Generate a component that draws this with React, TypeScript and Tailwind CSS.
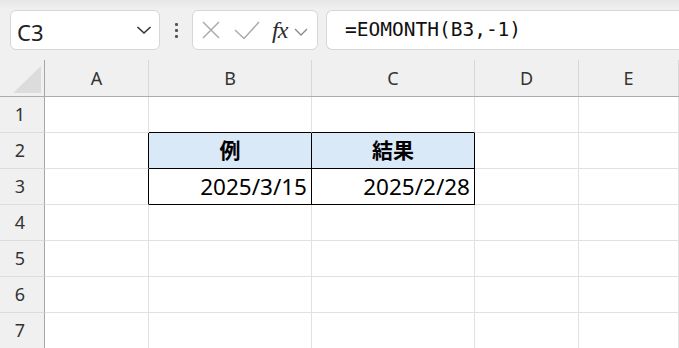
import React from "react";

const cols = ["A", "B", "C", "D", "E"];
const colW = ["w-[104px]", "w-[163px]", "w-[163px]", "w-[104px]", "flex-1"];

function Cell({
  children,
  className = "",
}: {
  children?: React.ReactNode;
  className?: string;
}) {
  return (
    <div className={"h-[36px] shrink-0 border-r border-b flex items-center " + className}>
      {children}
    </div>
  );
}

export default function App() {
  const rows = [1, 2, 3, 4, 5, 6, 7];
  const gridLine = "border-[#e1e1e1]";
  const renderCell = (r: number, c: number) => {
    const w = colW[c];
    let borders = gridLine;
    let extra = "";
    let content: React.ReactNode = null;
    const inTable = (r === 2 || r === 3) && (c === 1 || c === 2);
    if (inTable) {
      borders = "border-black";
      if (r === 2) {
        extra = "bg-[#dae9f7] justify-center font-bold text-[21px] text-black";
        content = c === 1 ? "例" : "結果";
      } else {
        extra = "justify-end pr-[4px] text-[22.5px] text-black";
        content = c === 1 ? "2025/3/15" : "2025/2/28";
      }
    } else if ((r === 2 || r === 3) && c === 0) {
      borders = "border-r-black border-b-[#e1e1e1]";
    } else if (r === 1 && (c === 1 || c === 2)) {
      borders = "border-b-black border-r-[#e1e1e1]";
    }
    return (
      <Cell key={c} className={`${w} ${borders} ${extra}`}>
        {content}
      </Cell>
    );
  };

  return (
    <div
      className="w-[679px] h-[348px] overflow-hidden bg-white"
      style={{ fontFamily: '"Noto Sans", "Noto Sans CJK JP", sans-serif' }}
    >
      {/* Toolbar */}
      <div className="h-[60px] flex items-start pt-[10px] pl-[10px] bg-gradient-to-b from-[#e6e6e6] to-[#f0f0f0] from-[0%] to-[15%]">
        {/* Name box */}
        <div className="w-[150px] h-[40px] rounded-[6px] border border-[#d6d6d6] bg-white flex items-center pl-[6px] pr-[6px] shrink-0">
          <span className="text-[22px] text-[#222] leading-none pt-[3px] flex-1">C3</span>
          <svg width="16" height="10" viewBox="0 0 16 10" className="mr-[1px]">
            <path d="M1.5 2 L8 8 L14.5 2" fill="none" stroke="#333" strokeWidth="1.6" />
          </svg>
        </div>
        {/* dots */}
        <div className="w-[32px] h-[40px] flex flex-col items-center justify-center gap-[3px] shrink-0">
          <div className="w-[3px] h-[3px] bg-[#555] rounded-[1px]" />
          <div className="w-[3px] h-[3px] bg-[#555] rounded-[1px]" />
          <div className="w-[3px] h-[3px] bg-[#555] rounded-[1px]" />
        </div>
        {/* fx box */}
        <div className="w-[126px] h-[40px] rounded-[6px] border border-[#d6d6d6] bg-white flex items-center pl-[8px] shrink-0">
          <svg width="20" height="20" viewBox="0 0 20 20">
            <path d="M2 2 L18 18 M18 2 L2 18" fill="none" stroke="#ababab" strokeWidth="1.5" />
          </svg>
          <svg width="26" height="20" viewBox="0 0 26 20" className="ml-[13px]">
            <path d="M1 10 L10 18.5 L25 2" fill="none" stroke="#ababab" strokeWidth="1.5" />
          </svg>
          <span
            className="ml-[12px] text-[24px] italic text-[#2a2a2a] leading-none tracking-[-1px]"
            style={{ fontFamily: '"Liberation Serif", "DejaVu Serif", serif' }}
          >
            fx
          </span>
          <svg width="14" height="8" viewBox="0 0 14 8" className="ml-[7px] mt-[3px]">
            <path d="M1 1 L7 7 L13 1" fill="none" stroke="#888" strokeWidth="1.3" />
          </svg>
        </div>
        {/* formula bar */}
        <div className="ml-[8px] flex-1 h-[40px] rounded-l-[6px] border border-r-0 border-[#d6d6d6] bg-white flex items-center pl-[18px]">
          <span
            className="text-[19.5px] text-[#111] leading-none"
            style={{ fontFamily: '"DejaVu Sans Mono", "Liberation Mono", monospace' }}
          >
            =EOMONTH(B3,-1)
          </span>
        </div>
      </div>

      {/* Column header */}
      <div className="flex h-[37px] bg-[#f0f0f0] border-b border-[#ababab]">
        <div className="w-[45px] shrink-0 border-r border-[#a6a6a6] relative">
          <svg width="45" height="36" viewBox="0 0 45 36" className="absolute left-0 top-0">
            <polygon points="13,33 41,33 41,6" fill="#dcdcdc" />
          </svg>
        </div>
        {cols.map((c, i) => (
          <div
            key={c}
            className={`${colW[i]} shrink-0 border-r border-[#d8d8d8] flex items-center justify-center text-[18px] text-[#333]`}
          >
            {c}
          </div>
        ))}
      </div>

      {/* Rows */}
      {rows.map((r) => (
        <div key={r} className="flex">
          <div className="w-[45px] h-[36px] shrink-0 bg-[#f0f0f0] border-r border-r-[#a6a6a6] border-b border-b-[#dcdcdc] flex items-center justify-center pr-[4px] text-[18px] text-[#333]">
            {r}
          </div>
          {cols.map((_, i) => renderCell(r, i))}
        </div>
      ))}
    </div>
  );
}
